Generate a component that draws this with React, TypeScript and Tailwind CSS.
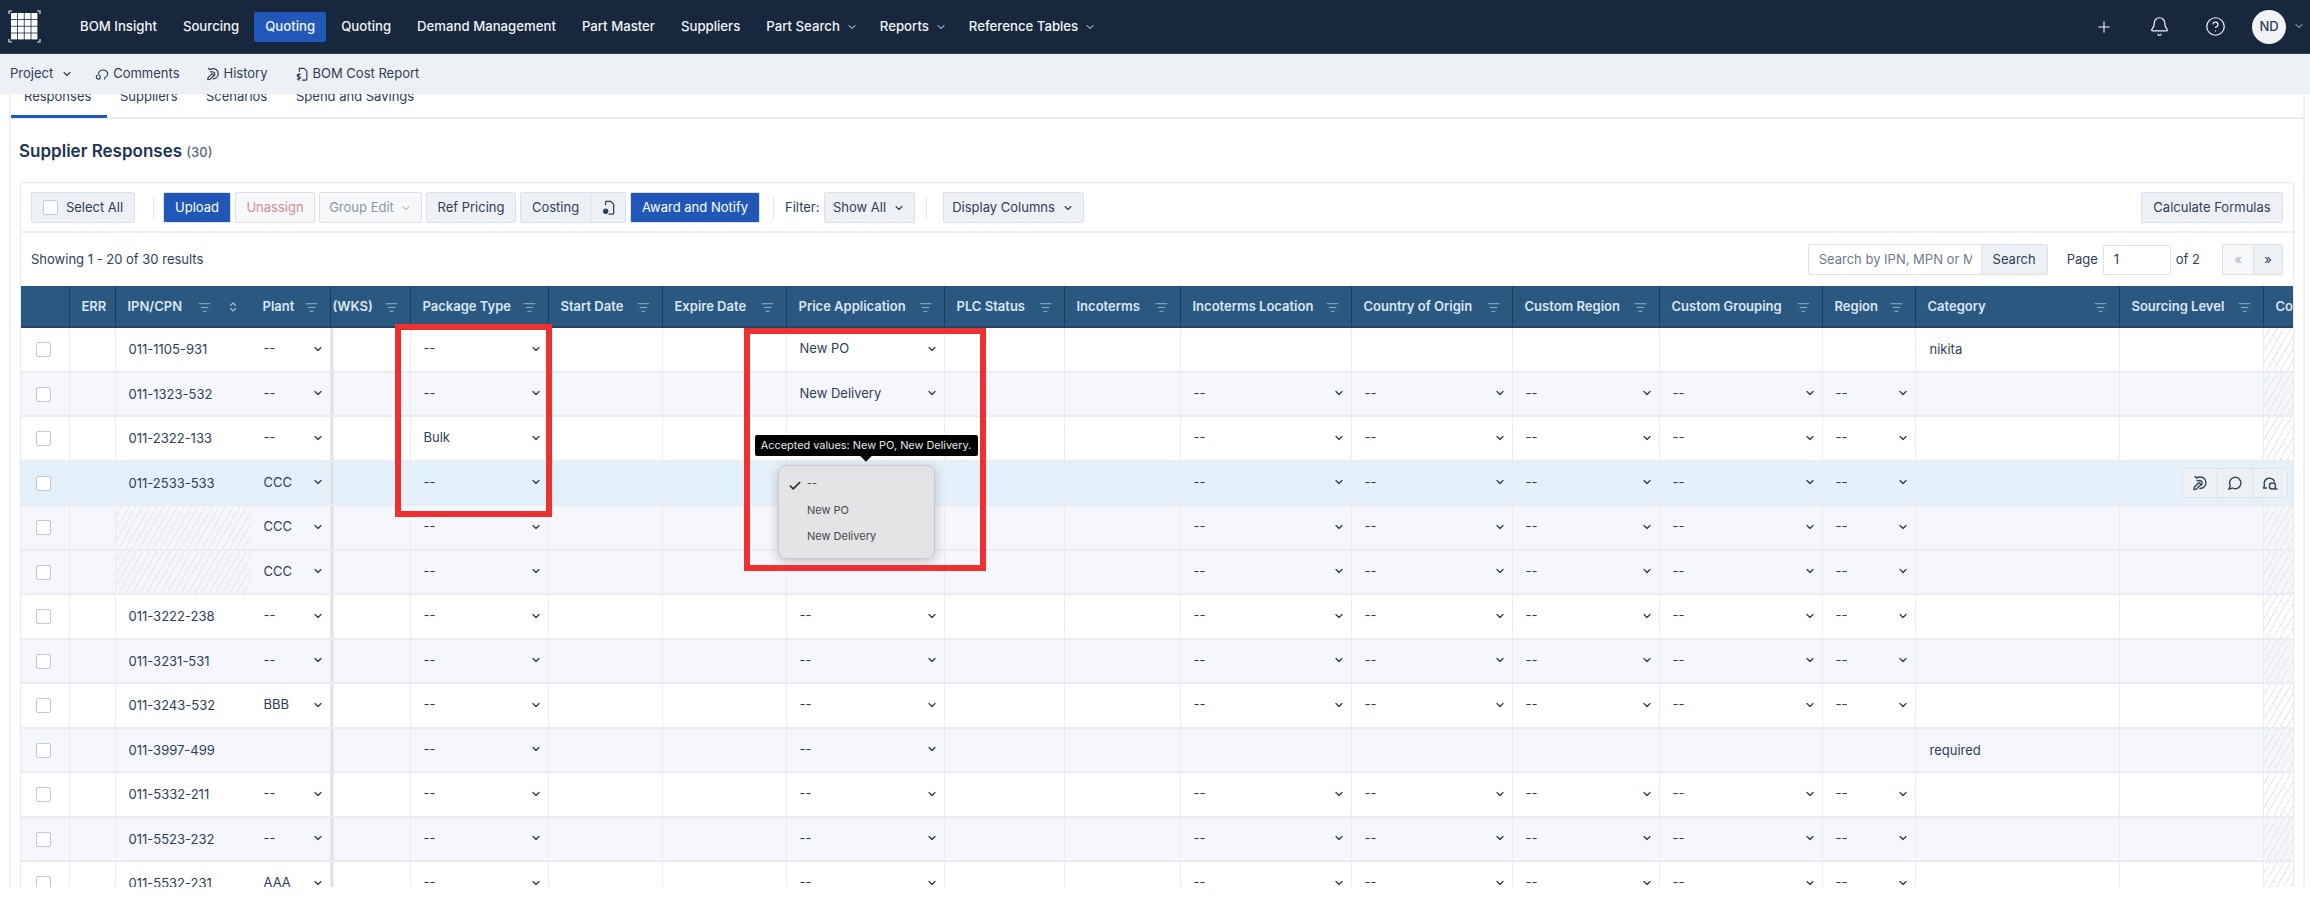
import { ChevronDown, ChevronsUpDown, ListFilter, Check, Plus, Bell, CircleHelp } from "lucide-react";
import type { ReactNode } from "react";

const hatch =
  "bg-[repeating-linear-gradient(120deg,transparent,transparent_5px,#e4e7eb_5px,#e4e7eb_6px)]";

type Col = { key: string; label: string; w: string };

const columns: Col[] = [
  { key: "check", label: "", w: "w-[48.5px]" },
  { key: "err", label: "ERR", w: "w-[46px]" },
  { key: "ipn", label: "IPN/CPN", w: "w-[135px]" },
  { key: "plant", label: "Plant", w: "w-[80px]" },
  { key: "wks", label: "(WKS)", w: "w-[80px]" },
  { key: "pack", label: "Package Type", w: "w-[138px]" },
  { key: "start", label: "Start Date", w: "w-[114px]" },
  { key: "expire", label: "Expire Date", w: "w-[124px]" },
  { key: "price", label: "Price Application", w: "w-[158px]" },
  { key: "plc", label: "PLC Status", w: "w-[120px]" },
  { key: "inco", label: "Incoterms", w: "w-[116px]" },
  { key: "incoLoc", label: "Incoterms Location", w: "w-[171px]" },
  { key: "country", label: "Country of Origin", w: "w-[161px]" },
  { key: "region1", label: "Custom Region", w: "w-[147px]" },
  { key: "group", label: "Custom Grouping", w: "w-[163px]" },
  { key: "region2", label: "Region", w: "w-[93px]" },
  { key: "category", label: "Category", w: "w-[204px]" },
  { key: "sourcing", label: "Sourcing Level", w: "w-[144px]" },
  { key: "co", label: "Co", w: "w-[31px]" },
];

type Row = {
  ipn: string;
  plant?: string;
  pack: string;
  price?: string;
  category?: string;
  selects: boolean;
  bg: string;
  active?: boolean;
};

const white = "bg-white";
const pale = "bg-[#f5f7fc]";

const rows: Row[] = [
  { ipn: "011-1105-931", plant: "--", pack: "--", price: "New PO", category: "nikita", selects: false, bg: white },
  { ipn: "011-1323-532", plant: "--", pack: "--", price: "New Delivery", selects: true, bg: pale },
  { ipn: "011-2322-133", plant: "--", pack: "Bulk", selects: true, bg: white },
  { ipn: "011-2533-533", plant: "CCC", pack: "--", selects: true, bg: "bg-[#e4f1fb]", active: true },
  { ipn: "", plant: "CCC", pack: "--", selects: true, bg: pale },
  { ipn: "", plant: "CCC", pack: "--", selects: true, bg: pale },
  { ipn: "011-3222-238", plant: "--", pack: "--", price: "--", selects: true, bg: white },
  { ipn: "011-3231-531", plant: "--", pack: "--", price: "--", selects: true, bg: pale },
  { ipn: "011-3243-532", plant: "BBB", pack: "--", price: "--", selects: true, bg: white },
  { ipn: "011-3997-499", pack: "--", price: "--", category: "required", selects: false, bg: pale },
  { ipn: "011-5332-211", plant: "--", pack: "--", price: "--", selects: true, bg: white },
  { ipn: "011-5523-232", plant: "--", pack: "--", price: "--", selects: true, bg: pale },
  { ipn: "011-5532-231", plant: "AAA", pack: "--", price: "--", selects: true, bg: white },
];

function Logo() {
  const squares = [];
  for (let y = 0; y < 4; y++) {
    for (let x = 0; x < 4; x++) {
      squares.push(<rect key={`${x}-${y}`} x={3 + x * 6.8} y={3 + y * 6.8} width="6" height="6" fill="#fff" />);
    }
  }
  return (
    <svg width="33" height="33" viewBox="0 0 33 33" fill="none">
      {squares}
      <path d="M1 4V1h3M29 1h3v3M1 29v3h3M29 32h3v-3" stroke="#dfe5ec" strokeWidth="1.2" />
    </svg>
  );
}

function HistoryIcon({ size = 14 }: { size?: number }) {
  return (
    <svg width={size} height={size} viewBox="0 0 16 16" fill="none" stroke="currentColor" strokeWidth="1.4" strokeLinecap="round" strokeLinejoin="round">
      <path d="M3 1.5l1.5 1.6L6 2.2c4-1 8 1 8 5.3 0 3.5-2.6 6-6 6" />
      <path d="M5 5.5h2.5c2.6 0 3.6 3 1.6 4.8" />
      <path d="M2 14.5l.4-2.4L7 7.6l2 2-4.6 4.5z" />
    </svg>
  );
}

function CommentIcon({ size = 14 }: { size?: number }) {
  return (
    <svg width={size} height={size} viewBox="0 0 16 16" fill="none" stroke="currentColor" strokeWidth="1.4" strokeLinecap="round" strokeLinejoin="round">
      <path d="M1.8 14.2l1.4-3.6A5.7 5.7 0 1 1 5.6 13z" />
    </svg>
  );
}

function CommentRingIcon({ size = 14 }: { size?: number }) {
  return (
    <svg width={size} height={size} viewBox="0 0 16 16" fill="none" stroke="currentColor" strokeWidth="1.3" strokeLinecap="round" strokeLinejoin="round">
      <path d="M4 7.5A5.5 5.5 0 0 1 14.5 7a5.5 5.5 0 0 1-3 5l-.5 1.8" />
      <circle cx="3.8" cy="11.5" r="2.3" />
    </svg>
  );
}

function CommentSquareIcon({ size = 14 }: { size?: number }) {
  return (
    <svg width={size} height={size} viewBox="0 0 16 16" fill="none" stroke="currentColor" strokeWidth="1.4" strokeLinecap="round" strokeLinejoin="round">
      <path d="M2.5 10.5A5.3 5.3 0 0 1 12.5 6.5" />
      <path d="M2.5 10.5l-1 2.5h3" />
      <rect x="7.5" y="8" width="6" height="6" rx="2.5" />
      <path d="M13.5 14h1.5" />
    </svg>
  );
}

function ReportIcon({ size = 14, money = false }: { size?: number; money?: boolean }) {
  return (
    <svg width={size} height={size} viewBox="0 0 16 16" fill="none" stroke="currentColor" strokeWidth="1.3" strokeLinecap="round" strokeLinejoin="round">
      <path d="M5 5V1.5h5.5l3 3V14a1 1 0 0 1-1 1H8.5" />
      {money ? (
        <path d="M6 8.5H3.8a1.2 1.2 0 0 0 0 2.6h1a1.2 1.2 0 0 1 0 2.6H2.5M4.3 7.5v7.5" />
      ) : (
        <circle cx="5" cy="12" r="2.2" fill="currentColor" />
      )}
    </svg>
  );
}

function Select({ value }: { value: string }) {
  return (
    <div className="flex h-full items-center justify-between pl-[13px] pr-[6px] pb-[1px]">
      <span>{value}</span>
      <ChevronDown size={12} strokeWidth={2.5} className="text-[#2e3e55]" />
    </div>
  );
}

function cellFor(col: Col, row: Row): ReactNode {
  switch (col.key) {
    case "check":
      return (
        <div className="flex h-full items-center justify-center pr-[2px] pt-[1px]">
          <span className="h-[15px] w-[15px] rounded-[2px] border-[1.5px] border-[#bdc9d6] bg-white" />
        </div>
      );
    case "ipn":
      return row.ipn ? <div className="flex h-full items-center pl-[13px] pt-[1px]">{row.ipn}</div> : null;
    case "plant":
      return row.plant ? <Select value={row.plant} /> : null;
    case "pack":
      return <Select value={row.pack} />;
    case "price":
      return row.price ? <Select value={row.price} /> : null;
    case "incoLoc":
    case "country":
    case "region1":
    case "group":
    case "region2":
      return row.selects ? <Select value="--" /> : null;
    case "category":
      return row.category ? <div className="flex h-full items-center pl-[14px] pt-[1px]">{row.category}</div> : null;
    default:
      return null;
  }
}

function Table() {
  return (
    <div className="relative h-[601px] overflow-hidden">
      <div className="flex h-[42px] bg-[#2a5880] text-[13px] font-semibold text-[#dbe6f0]">
        {columns.map((c) => (
          <div
            key={c.key}
            className={`${c.w} flex shrink-0 items-center justify-between overflow-hidden whitespace-nowrap border-b-2 border-[#1f4668] pt-[2px] ${
              c.key === "ipn" ? "" : "border-r border-r-[#1b3d5c]"
            } ${c.key === "wks" ? "pl-[2px]" : "pl-3"} pr-[12px]`}
          >
            <span>{c.label}</span>
            {c.key === "ipn" && (
              <span className="flex items-center gap-4 text-[#a9c3d8]">
                <ListFilter size={13} strokeWidth={1.5} />
                <ChevronsUpDown size={12} strokeWidth={2.2} />
              </span>
            )}
            {c.label && c.key !== "ipn" && c.key !== "err" && c.key !== "co" && (
              <ListFilter size={13} strokeWidth={1.5} className="shrink-0 text-[#a9c3d8]" />
            )}
          </div>
        ))}
      </div>
      {rows.map((row) => (
        <div key={row.ipn + row.plant + row.pack + row.bg} className="flex h-[44.5px] border-b-2 border-[#e9edf3] text-[13px] text-[#2e3e55]">
          {columns.map((c) => {
            const isHatch = (c.key === "co" && !row.active) || (c.key === "ipn" && !row.ipn);
            return (
              <div
                key={c.key}
                className={`${c.w} h-full shrink-0 ${row.bg} ${c.key === "ipn" ? "" : "border-r border-r-[#e8edf2]"} ${isHatch ? hatch : ""} ${
                  c.key === "wks" ? "bg-[linear-gradient(90deg,#d6dadf,transparent_4px)]" : ""
                }`}
              >
                {cellFor(c, row)}
              </div>
            );
          })}
        </div>
      ))}

      {/* row hover actions */}
      <div className="absolute left-[2161px] top-[182px] flex h-[30px] w-[106px] rounded-[3px] border border-[#dbe1e7] bg-[#edf1f5] text-[#33435a]">
        <button className="flex flex-1 items-center justify-center border-r border-[#dbe1e7]">
          <HistoryIcon size={16} />
        </button>
        <button className="flex flex-1 items-center justify-center border-r border-[#dbe1e7]">
          <CommentIcon size={16} />
        </button>
        <button className="flex flex-1 items-center justify-center">
          <CommentSquareIcon size={16} />
        </button>
      </div>

      {/* native select menu */}
      <div className="absolute left-[757px] top-[179px] z-10 flex h-[94px] w-[157px] flex-col rounded-[8px] border border-[#c9c9ce] bg-[#e4e3e6] pl-[28px] pt-[9px] text-[11px] text-[#48484c] shadow-[0_3px_12px_rgba(0,0,0,0.22)]">
        <Check size={14} strokeWidth={3} className="absolute left-[9px] top-[13px] text-[#2c2c2e]" />
        <div className="h-[26.5px]">--</div>
        <div className="h-[26.5px]">New PO</div>
        <div className="h-[26.5px]">New Delivery</div>
      </div>

      {/* tooltip */}
      <div className="absolute left-[733.5px] top-[149px] z-20 flex h-[21px] w-[223px] items-center justify-center rounded-[2px] bg-black text-[10.9px] whitespace-nowrap text-[#e8e8e8]">
        Accepted values: New PO, New Delivery.
        <span className="absolute -bottom-[4px] left-[107px] h-[8px] w-[8px] rotate-45 bg-black" />
      </div>

      {/* review markers */}
      <div className="pointer-events-none absolute left-[374px] top-[38px] z-30 h-[193px] w-[157px] border-[6px] border-[#ee3030]" />
      <div className="pointer-events-none absolute left-[723px] top-[42px] z-30 h-[243px] w-[242px] border-[6px] border-[#ee3030]" />
    </div>
  );
}

const navItems = [
  { label: "BOM Insight" },
  { label: "Sourcing" },
  { label: "Quoting", active: true },
  { label: "Quoting" },
  { label: "Demand Management" },
  { label: "Part Master" },
  { label: "Suppliers" },
  { label: "Part Search", menu: true },
  { label: "Reports", menu: true },
  { label: "Reference Tables", menu: true },
];

function Btn({ children, className = "" }: { children: ReactNode; className?: string }) {
  return (
    <button className={`flex h-[31px] items-center justify-center rounded-[2px] border border-[#d9e0e7] bg-[#edf1f5] text-[#2e3e55] ${className}`}>
      {children}
    </button>
  );
}

export default function App() {
  return (
    <div className="h-[910px] w-[2310px] overflow-hidden bg-white font-['Inter',sans-serif] text-[13px] text-[#2e3e55]">
      {/* top nav */}
      <nav className="flex h-[54px] items-center border-b border-[#33445c] bg-[#17273d] text-white">
        <div className="ml-[8px] w-[33px]">
          <Logo />
        </div>
        <div className="ml-[28px] flex gap-1 text-[13.2px] font-medium text-[#f0f3f6]">
          {navItems.map((n, i) => (
            <a
              key={i}
              className={`flex h-[30px] items-center gap-[6px] rounded-[2px] px-[11px] ${n.active ? "bg-[#2158b8]" : ""}`}
            >
              {n.label}
              {n.menu && <ChevronDown size={12} strokeWidth={2} className="-mr-[4px]" />}
            </a>
          ))}
        </div>
        <div className="ml-auto flex items-center text-[#f0f3f6]">
          <Plus size={18} strokeWidth={1.5} />
          <Bell size={21} strokeWidth={1.4} className="ml-[36px]" />
          <CircleHelp size={21} strokeWidth={1.4} className="ml-[35px]" />
          <span className="ml-[26px] flex h-[34px] w-[34px] items-center justify-center rounded-full bg-[#f1f3f5] text-[13px] font-medium text-[#2e3e55]">
            ND
          </span>
          <ChevronDown size={12} strokeWidth={1.8} className="mb-[2px] ml-[7px] mr-[5px]" />
        </div>
      </nav>

      {/* project bar */}
      <div className="flex h-[40px] items-center bg-[#edf1f5] pl-[10px]">
        <span>Project</span>
        <ChevronDown size={12} strokeWidth={2.2} className="ml-[8px]" />
        <span className="ml-[22px] flex items-center gap-[4px]">
          <CommentRingIcon size={14} />
          Comments
        </span>
        <span className="ml-[26px] flex items-center gap-[4px]">
          <HistoryIcon size={14} />
          History
        </span>
        <span className="ml-[27px] flex items-center gap-[4px]">
          <ReportIcon size={14} money />
          BOM Cost Report
        </span>
      </div>

      {/* page panel */}
      <div className="ml-[9px] h-[793px] w-[2296px] overflow-hidden border-x-2 border-[#eef2f6]">
        {/* tabs, scrolled partly under the bar above */}
        <div className="relative flex h-[25px] border-b-2 border-[#e8ecf1]">
          <div className="-mt-[7px] flex h-[25px] text-[13px]">
            <span className="ml-[13px] w-[96px]">Responses</span>
            <span className="w-[86px]">Suppliers</span>
            <span className="w-[90px]">Scenarios</span>
            <span>Spend and Savings</span>
          </div>
          <span className="absolute bottom-[-1px] left-0 h-[3px] w-[96px] bg-[#2158b8]" />
        </div>

        <h1 className="ml-[8px] mt-[20px] h-[24px] text-[17px] font-semibold leading-[24px] text-[#1d3550]">
          Supplier Responses <span className="text-[13px] font-medium text-[#5b6878]">(30)</span>
        </h1>

        {/* card */}
        <div className="ml-[9px] mt-[19px] w-[2274px] rounded-t-[3px] border-x border-t border-[#e4e9ef]">
          <div className="flex h-[50px] items-center border-b-2 border-[#edf1f4] pl-[10px] pr-[10px] pt-[1px]">
            <Btn className="w-[104px] gap-[8px]">
              <span className="h-[15px] w-[15px] rounded-[2px] border-[1.5px] border-[#c2cdd9] bg-white" />
              Select All
            </Btn>
            <span className="ml-[18px] mr-[9px] h-[22px] w-px bg-[#e2e7ec]" />
            <Btn className="w-[68px] border-[#2158b8] !bg-[#2158b8] text-white">Upload</Btn>
            <Btn className="ml-[4px] w-[80px] !bg-[#f6f8fa] text-[#d28b8f]">Unassign</Btn>
            <Btn className="ml-[4px] w-[103px] gap-[6px] !bg-[#f6f8fa] text-[#8d97a3]">
              Group Edit
              <ChevronDown size={12} strokeWidth={2} />
            </Btn>
            <Btn className="ml-[4px] w-[90px]">Ref Pricing</Btn>
            <Btn className="ml-[4px] w-[71px] rounded-r-none">Costing</Btn>
            <Btn className="w-[35px] rounded-l-none border-l-0">
              <ReportIcon size={15} />
            </Btn>
            <Btn className="ml-[4px] w-[130px] border-[#2158b8] !bg-[#2158b8] text-white">Award and Notify</Btn>
            <span className="ml-[13px] mr-[11px] h-[22px] w-px bg-[#e2e7ec]" />
            <span>Filter:</span>
            <Btn className="ml-[4px] w-[91px] gap-[7px]">
              Show All
              <ChevronDown size={12} strokeWidth={2.2} />
            </Btn>
            <span className="ml-[11px] mr-[16px] h-[22px] w-px bg-[#e2e7ec]" />
            <Btn className="w-[141px] gap-[7px]">
              Display Columns
              <ChevronDown size={12} strokeWidth={2.2} />
            </Btn>
            <Btn className="ml-auto w-[142px]">Calculate Formulas</Btn>
          </div>

          <div className="flex h-[53px] items-center pl-[10px] pr-[10px]">
            <span>Showing 1 - 20 of 30 results</span>
            <div className="ml-auto flex items-center">
              <div className="flex h-[31px] w-[174px] items-center rounded-l-[2px] border border-[#dde3e9] bg-white pl-[10px] text-[#6f7a88]">
                <span className="block w-[153px] overflow-hidden whitespace-nowrap">Search by IPN, MPN or MPN</span>
              </div>
              <Btn className="w-[66px] rounded-l-none border-l-0">Search</Btn>
              <span className="ml-[19px]">Page</span>
              <div className="ml-[5px] flex h-[30px] w-[68px] items-center rounded-[2px] border border-[#dde3e9] bg-white pl-[10px]">1</div>
              <span className="ml-[5px]">of 2</span>
              <div className="ml-[22px] flex">
                <Btn className="w-[31px] rounded-r-none border-r-0 !bg-[#f6f8fa] text-[#a9b2bd]">«</Btn>
                <Btn className="w-[30px] rounded-l-none">»</Btn>
              </div>
            </div>
          </div>

          <Table />
        </div>
      </div>
    </div>
  );
}
